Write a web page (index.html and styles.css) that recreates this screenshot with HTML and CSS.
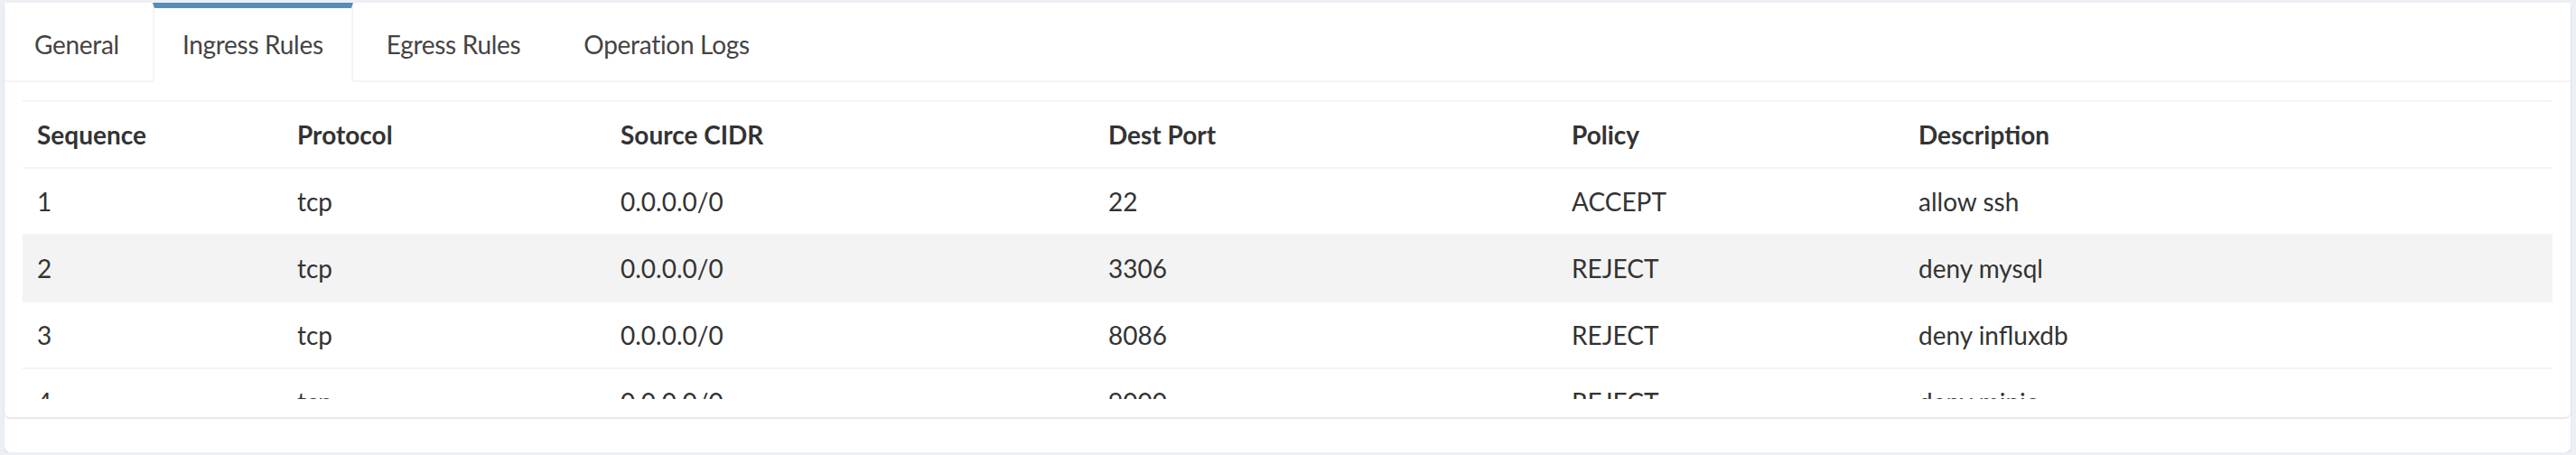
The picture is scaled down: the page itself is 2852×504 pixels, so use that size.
FILE: index.html
```html
<!DOCTYPE html>
<html>
<head>
<meta charset="utf-8">
<link rel="stylesheet" href="styles.css">
</head>
<body>
<div class="card">
  <div class="tabs-box">
    <ul class="tabs">
      <li class="tab"><a>General</a></li>
      <li class="tab active"><a>Ingress Rules</a></li>
      <li class="tab"><a>Egress Rules</a></li>
      <li class="tab"><a>Operation Logs</a></li>
    </ul>
    <div class="tab-content">
      <div class="scroll">
        <table class="rules">
          <colgroup>
            <col class="c-seq"><col class="c-proto"><col class="c-cidr"><col class="c-port"><col class="c-policy"><col class="c-desc">
          </colgroup>
          <thead>
            <tr><th>Sequence</th><th>Protocol</th><th>Source CIDR</th><th>Dest Port</th><th>Policy</th><th>Description</th></tr>
          </thead>
          <tbody>
            <tr><td>1</td><td>tcp</td><td>0.0.0.0/0</td><td>22</td><td>ACCEPT</td><td>allow ssh</td></tr>
            <tr class="hovered"><td>2</td><td>tcp</td><td>0.0.0.0/0</td><td>3306</td><td>REJECT</td><td>deny mysql</td></tr>
            <tr><td>3</td><td>tcp</td><td>0.0.0.0/0</td><td>8086</td><td>REJECT</td><td>deny influxdb</td></tr>
            <tr><td>4</td><td>tcp</td><td>0.0.0.0/0</td><td>9000</td><td>REJECT</td><td>deny minio</td></tr>
            <tr><td>5</td><td>tcp</td><td>0.0.0.0/0</td><td>6379</td><td>REJECT</td><td>deny redis</td></tr>
          </tbody>
        </table>
      </div>
    </div>
  </div>
</div>
</body>
</html>
```
FILE: styles.css
```css
html, body {
  margin: 0;
  padding: 0;
}
body {
  background: #ecf0f5;
  padding: 3px 6px 0 5px;
  font-family: Lato, "Liberation Sans", sans-serif;
  font-size: 28px;
  color: #333;
}
.card {
  background: #fff;
  height: 498px;
  border-radius: 0 0 6px 6px;
  box-shadow: 0 2px 2px rgba(0, 0, 0, 0.1);
  box-sizing: border-box;
}
.tabs-box {
  background: #fff;
  border-radius: 6px;
  box-shadow: 0 2px 2px rgba(0, 0, 0, 0.1);
}
.tabs {
  list-style: none;
  margin: 0;
  padding: 0;
  display: flex;
  border-bottom: 2px solid #f4f4f4;
}
.tab {
  margin-right: 4px;
  margin-bottom: -2px;
}
.tab a {
  display: block;
  padding: 20px 31px;
  line-height: 40px;
  color: #444;
  letter-spacing: -0.3px;
  border-top: 6px solid transparent;
  border-left: 2px solid transparent;
  border-right: 2px solid transparent;
  border-bottom: 2px solid transparent;
}
.tab.active a {
  border-top-color: #5a8cb8;
  border-left-color: #f4f4f4;
  border-right-color: #f4f4f4;
  border-bottom-color: #fff;
  background: #fff;
}
.tab-content {
  padding: 20px;
}
.scroll {
  height: 331px;
  overflow: hidden;
}
.rules {
  width: 100%;
  border-collapse: collapse;
  table-layout: fixed;
}
.c-seq { width: 288px; }
.c-proto { width: 358px; }
.c-cidr { width: 540px; }
.c-port { width: 513px; }
.c-policy { width: 384px; }
.rules th, .rules td {
  text-align: left;
  padding: 16px;
  line-height: 40px;
  border-top: 2px solid #f4f4f4;
  white-space: nowrap;
}
.rules th {
  font-weight: 700;
  border-bottom: 2px solid #f4f4f4;
}
.rules tbody tr.hovered {
  background: #f3f3f3;
}
```
